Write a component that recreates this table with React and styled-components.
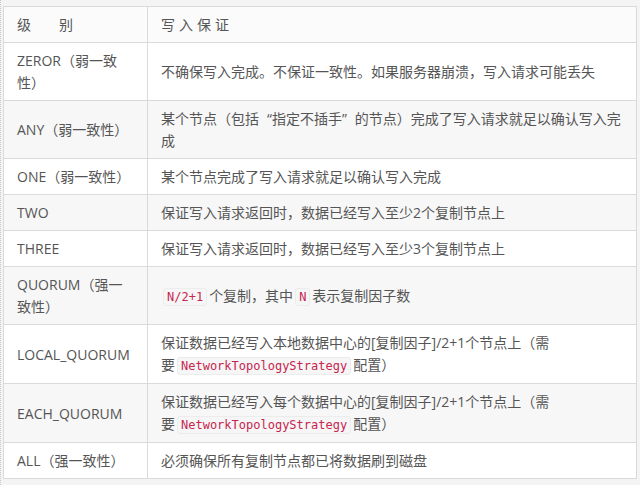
import React from 'react';
import styled, { createGlobalStyle } from 'styled-components';

const GlobalStyle = createGlobalStyle`
  html, body {
    margin: 0;
    padding: 0;
    background: #f4f4f4;
  }
  body {
    font-family: "Open Sans", "Noto Sans CJK SC", sans-serif;
    color: #555;
  }
`;

const Page = styled.div`
  padding: 6px 3px 0 2px;
  border-left: 1px dotted #c8c8c8;
  width: 634px;
  box-sizing: border-box;
  min-height: 485px;
`;

const Table = styled.table`
  width: 634px;
  border-collapse: collapse;
  font-size: 14px;
  line-height: 22px;
  background: #fff;
`;

const Row = styled.tr`
  background: ${(p) => (p.$shade ? '#f7f7f7' : '#fff')};
`;

const Cell = styled.td`
  border: 1px solid #dadada;
  padding: 7px 12px 6px 13px;
  vertical-align: middle;
  width: ${(p) => (p.$first ? '118px' : 'auto')};
`;

const Head = styled.th`
  border: 1px solid #dadada;
  padding: 7px 13px 6px;
  text-align: left;
  font-weight: normal;
  letter-spacing: ${(p) => p.$spacing || '0'};
  background: #fbfbfb;
`;

const Code = styled.code`
  font-family: "DejaVu Sans Mono", "Liberation Mono", monospace;
  font-size: 12px;
  color: #c7254e;
  background: #f6f6f6;
  border: 1px solid #ececec;
  border-radius: 3px;
  padding: 1px 3px;
  margin: 0 2px;
`;

/* full-width looking quotes: pad the outer side of the glyph */
const Quote = styled.span`
  margin-left: ${(p) => (p.$close ? '0' : '8px')};
  margin-right: ${(p) => (p.$close ? '8px' : '0')};
`;

const Keep = styled.span`
  white-space: nowrap;
`;

const rows = [
  ['ZEROR（弱一致性）', '不确保写入完成。不保证一致性。如果服务器崩溃，写入请求可能丢失'],
  ['ANY（弱一致性）', <>某个节点（包括<Quote>“</Quote>指定不插手<Quote $close>”</Quote>的节点）完成了写入请求就足以确认写入完成</>],
  ['ONE（弱一致性）', '某个节点完成了写入请求就足以确认写入完成'],
  ['TWO', '保证写入请求返回时，数据已经写入至少2个复制节点上'],
  ['THREE', '保证写入请求返回时，数据已经写入至少3个复制节点上'],
  ['QUORUM（强一致性）', <><Code>N/2+1</Code>个复制，其中<Code>N</Code>表示复制因子数</>],
  ['LOCAL_QUORUM', <>保证数据已经写入本地数据中心的[复制因子]/2+1个节点上（需<Keep>要<Code>NetworkTopologyStrategy</Code>配置）</Keep></>],
  ['EACH_QUORUM', <>保证数据已经写入每个数据中心的[复制因子]/2+1个节点上（需<Keep>要<Code>NetworkTopologyStrategy</Code>配置）</Keep></>],
  ['ALL（强一致性）', '必须确保所有复制节点都已将数据刷到磁盘'],
];

export default function App() {
  return (
    <>
      <GlobalStyle />
      <Page>
        <Table>
          <thead>
            <tr>
              <Head $spacing="0">级　　别</Head>
              <Head $spacing="4px">写入保证</Head>
            </tr>
          </thead>
          <tbody>
            {rows.map(([level, desc], i) => (
              <Row key={i} $shade={i % 2 === 1}>
                <Cell $first>{level}</Cell>
                <Cell>{desc}</Cell>
              </Row>
            ))}
          </tbody>
        </Table>
      </Page>
    </>
  );
}
